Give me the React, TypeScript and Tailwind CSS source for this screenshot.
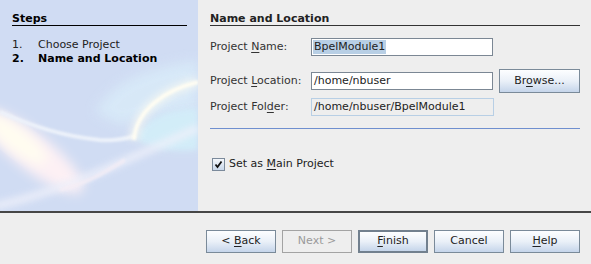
import React from "react";

const font = { fontFamily: '"DejaVu Sans", "Liberation Sans", sans-serif' };

function U({ children }: { children: React.ReactNode }) {
  return <span className="underline underline-offset-2 decoration-1">{children}</span>;
}

function Btn({
  children,
  def,
  disabled,
}: {
  children: React.ReactNode;
  def?: boolean;
  disabled?: boolean;
}) {
  if (disabled) {
    return (
      <div className="w-[70px] h-[23px] border border-[#a3a3a3] bg-[#eeeeee] text-[#9a9a9a] flex items-center justify-center text-[11px]">
        <span className="whitespace-pre">{children}</span>
      </div>
    );
  }
  return (
    <div
      className={
        "w-[70px] h-[23px] bg-gradient-to-b from-[#fdfeff] via-[#eaf0f8] to-[#c5d5ea] text-[#222] flex items-center justify-center text-[11px] " +
        (def ? "border-2 border-[#72808e]" : "border border-[#7a8a99]")
      }
    >
      <span className="whitespace-pre">{children}</span>
    </div>
  );
}

function Swirl() {
  return (
    <svg className="absolute inset-0" width="198" height="211" viewBox="0 0 198 211">
      <defs>
        <filter id="b1" x="-20%" y="-20%" width="140%" height="140%">
          <feGaussianBlur stdDeviation="0.8" />
        </filter>
        <filter id="b3" x="-20%" y="-20%" width="140%" height="140%">
          <feGaussianBlur stdDeviation="3" />
        </filter>
        <filter id="b6" x="-30%" y="-30%" width="160%" height="160%">
          <feGaussianBlur stdDeviation="6" />
        </filter>
      </defs>
      <rect width="198" height="211" fill="#d0dcf3" />
      <path d="M95 112 C 110 90, 125 72, 198 60 L 198 108 C 170 110, 150 115, 120 125 Z" fill="#d9ecf9" opacity="0.8" filter="url(#b6)" />
      <path d="M136 138 C 145 118, 165 110, 198 108 L 198 150 C 175 152, 150 150, 136 138 Z" fill="#d3eef9" opacity="0.95" filter="url(#b3)" />
      <g transform="rotate(38 30 150)">
        <ellipse cx="32" cy="150" rx="64" ry="18" fill="#fdf0f4" opacity="1" filter="url(#b6)" />
        <ellipse cx="12" cy="150" rx="38" ry="11" fill="#fffdf0" opacity="1" filter="url(#b6)" />
      </g>
      <path d="M-5 206 C 50 195, 110 168, 198 128" stroke="#eef0fa" strokeWidth="9" fill="none" opacity="0.75" filter="url(#b3)" />
      <path d="M60 190 C 90 182, 105 172, 125 160" stroke="#f6eef5" strokeWidth="4" fill="none" opacity="0.7" filter="url(#b1)" />
      <path d="M0 112 C 30 125, 60 136, 100 140 C 115 141, 125 139, 135 136" stroke="#eef3fb" strokeWidth="4" fill="none" opacity="0.95" filter="url(#b1)" />
      <path d="M134 140 C 136 110, 165 90, 198 82" stroke="#fbfaf2" strokeWidth="12" fill="none" opacity="0.55" filter="url(#b3)" />
      <path d="M134 140 C 136 110, 165 90, 198 82" stroke="#fffdf2" strokeWidth="4" fill="none" opacity="0.95" filter="url(#b1)" />
    </svg>
  );
}

export default function App() {
  return (
    <div className="w-[591px] h-[264px] bg-[#eeeeee] flex flex-col overflow-hidden" style={font}>
      <div className="flex h-[211px]">
        <div className="relative w-[198px] h-[211px]">
          <Swirl />
          <div className="relative pl-[12px] pr-[11px] pt-[12px]">
            <div className="h-[14px] border-b border-black text-[11px] font-bold leading-[13px] text-black">
              Steps
            </div>
            <div className="mt-[12px] text-[11px] leading-[14px] text-[#222]">
              <div className="flex">
                <span className="w-[26px]">1.</span>
                <span>Choose Project</span>
              </div>
              <div className="flex font-bold text-black">
                <span className="w-[26px]">2.</span>
                <span>Name and Location</span>
              </div>
            </div>
          </div>
        </div>
        <div className="flex-1 pl-[12px] pr-[11px] pt-[12px] text-[11px] text-[#333]">
          <div className="h-[14px] border-b border-[#333] font-bold leading-[13px] text-[#222]">
            Name and Location
          </div>
          <div className="mt-[12px] flex items-center h-[18px]">
            <div className="w-[101px]">
              Project <U>N</U>ame:
            </div>
            <div className="w-[182px] h-[18px] border border-[#7b8794] bg-white flex items-center pl-[1px]">
              <span className="bg-[#b8cfe5] h-[14px] leading-[14px] px-[1px] text-[#222]">BpelModule1</span>
            </div>
          </div>
          <div className="mt-[13px] flex items-center h-[24px]">
            <div className="w-[101px]">
              Project <U>L</U>ocation:
            </div>
            <div className="w-[182px] h-[18px] border border-[#7b8794] bg-white flex items-center pl-[2px] text-[#222]">
              /home/nbuser
            </div>
            <div className="ml-[6px] w-[81px] h-[24px] border border-[#7a8a99] bg-gradient-to-b from-[#fdfeff] via-[#eaf0f8] to-[#c5d5ea] flex items-center justify-center text-[#222]">
              <span>
                Br<U>o</U>wse...
              </span>
            </div>
          </div>
          <div className="mt-[5px] flex items-center h-[18px]">
            <div className="w-[101px]">
              Project Fol<U>d</U>er:
            </div>
            <div className="w-[183px] h-[18px] border border-[#b8cfe5] flex items-center pl-[2px] text-[#222]">
              /home/nbuser/BpelModule1
            </div>
          </div>
          <div className="mt-[12px] h-px bg-[#6f8fcf]" />
          <div className="mt-[29px] ml-[2px] flex items-center h-[13px]">
            <div className="w-[13px] h-[13px] border border-[#7b8a9b] bg-gradient-to-b from-[#f4f7fb] to-[#c8d7ea] flex items-center justify-center">
              <svg width="9" height="9" viewBox="0 0 9 9">
                <path d="M1.5 4.5 L3.5 7 L7.5 1.5" stroke="#111" strokeWidth="1.8" fill="none" />
              </svg>
            </div>
            <span className="ml-[4px] text-[#222]">
              Set as <U>M</U>ain Project
            </span>
          </div>
        </div>
      </div>
      <div className="h-[2px] bg-[#464646]" />
      <div className="flex-1 flex justify-end items-start pt-[17px] pr-[11px] gap-[6px]">
        <Btn>
          {"< "}
          <U>B</U>ack
        </Btn>
        <Btn disabled>Next &gt;</Btn>
        <Btn def>
          <U>F</U>inish
        </Btn>
        <Btn>Cancel</Btn>
        <Btn>
          <U>H</U>elp
        </Btn>
      </div>
    </div>
  );
}
